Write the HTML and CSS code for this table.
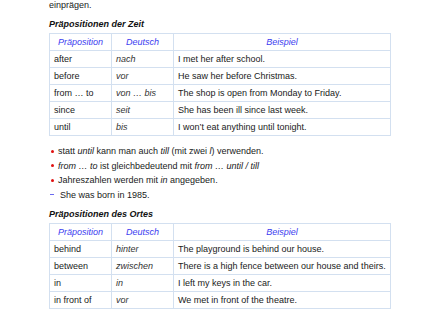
FILE: index.html
```html
<!DOCTYPE html>
<html lang="de">
<head>
<meta charset="utf-8">
<link rel="stylesheet" href="styles.css">
</head>
<body>
<div class="page">
  <p class="intro">einprägen.</p>
  <h3 class="heading">Präpositionen der Zeit</h3>
  <table class="grid">
    <colgroup><col class="c-prep"><col class="c-de"><col class="c-ex"></colgroup>
    <thead>
      <tr><th>Präposition</th><th>Deutsch</th><th>Beispiel</th></tr>
    </thead>
    <tbody>
      <tr><td>after</td><td class="de">nach</td><td>I met her after school.</td></tr>
      <tr><td>before</td><td class="de">vor</td><td>He saw her before Christmas.</td></tr>
      <tr><td>from … to</td><td class="de">von … bis</td><td>The shop is open from Monday to Friday.</td></tr>
      <tr><td>since</td><td class="de">seit</td><td>She has been ill since last week.</td></tr>
      <tr><td>until</td><td class="de">bis</td><td>I won’t eat anything until tonight.</td></tr>
    </tbody>
  </table>
  <ul class="notes">
    <li class="dot">statt <i>until</i> kann man auch <i>till</i> (mit zwei <i>l</i>) verwenden.</li>
    <li class="dot"><i>from … to</i> ist gleichbedeutend mit <i>from … until / till</i></li>
    <li class="dot">Jahreszahlen werden mit <i>in</i> angegeben.</li>
    <li class="dash">She was born in 1985.</li>
  </ul>
  <h3 class="heading">Präpositionen des Ortes</h3>
  <table class="grid">
    <colgroup><col class="c-prep"><col class="c-de"><col class="c-ex"></colgroup>
    <thead>
      <tr><th>Präposition</th><th>Deutsch</th><th>Beispiel</th></tr>
    </thead>
    <tbody>
      <tr><td>behind</td><td class="de">hinter</td><td>The playground is behind our house.</td></tr>
      <tr><td>between</td><td class="de">zwischen</td><td>There is a high fence between our house and theirs.</td></tr>
      <tr><td>in</td><td class="de">in</td><td>I left my keys in the car.</td></tr>
      <tr><td>in front of</td><td class="de">vor</td><td>We met in front of the theatre.</td></tr>
    </tbody>
  </table>
</div>
</body>
</html>
```

FILE: styles.css
```css
html, body {
  margin: 0;
  padding: 0;
  background: #ffffff;
}
body {
  font-family: "Liberation Sans", Arial, sans-serif;
  font-size: 9px;
  color: #1a1a1a;
  overflow: hidden;
}
.page {
  padding-left: 49px;
  width: 342px;
}
.intro {
  margin: -2px 0 0 0;
  line-height: 14px;
}
.heading {
  margin: 5px 0 2px 0;
  font-size: 9px;
  line-height: 14px;
  font-weight: bold;
  font-style: italic;
  color: #111111;
}
.grid {
  width: 342px;
  border-collapse: collapse;
  table-layout: fixed;
}
.c-prep { width: 62px; }
.c-de { width: 62px; }
.grid th, .grid td {
  border: 1px solid #d3e0f0;
  height: 16px;
  padding: 0 0 0 4px;
  text-align: left;
  vertical-align: middle;
  line-height: 12px;
  white-space: nowrap;
  overflow: hidden;
}
.grid th {
  font-weight: normal;
  font-style: italic;
  color: #3c3cf0;
  text-align: center;
  padding: 0;
}
.grid td.de {
  font-style: italic;
  color: #333333;
}
.notes {
  list-style: none;
  margin: 8px 0 5px 0;
  padding: 0;
}
.notes li {
  line-height: 14.5px;
  display: flex;
  align-items: center;
  white-space: pre;
}
.notes li.dot::before {
  content: "";
  width: 3px;
  height: 3px;
  border-radius: 50%;
  background: #e01010;
  margin: 0 4px 0 2px;
  flex: none;
}
.notes li.dash {
  padding-left: 1px;
}
.notes li.dash::before {
  content: "";
  width: 4px;
  height: 1px;
  background: #6a6af0;
  margin: 0 6px 0 0;
  flex: none;
}
.notes i {
  font-style: italic;
}
```
